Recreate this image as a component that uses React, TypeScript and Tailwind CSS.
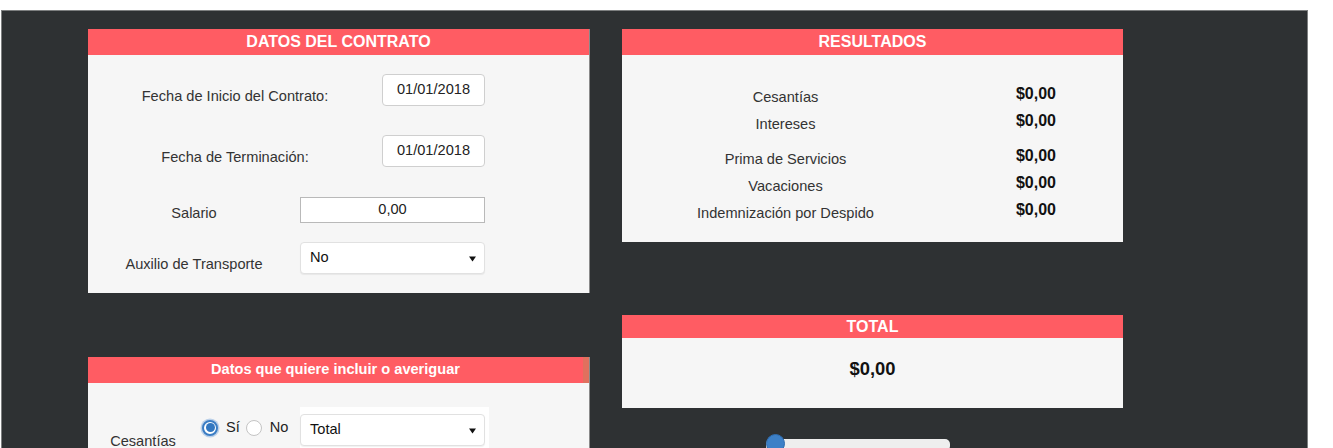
import React from 'react';

const font = { fontFamily: '"Liberation Sans", Arial, sans-serif' };

function Arrow() {
  return (
    <svg width="7" height="7" viewBox="0 0 7 7" className="shrink-0">
      <path d="M0 1.5 H7 L3.5 6.5 Z" fill="#111" />
    </svg>
  );
}

function CardHeader({ title, small = false, h = 'h-[26px]' }: { title: string; small?: boolean; h?: string }) {
  return (
    <div
      className={`${h} bg-[#ff5c63] flex items-center justify-center text-white font-bold ${
        small ? 'text-[14.6px]' : 'text-[16px]'
      }`}
    >
      {title}
    </div>
  );
}

function DateBox({ value }: { value: string }) {
  return (
    <div className="w-[103px] h-[32px] bg-white border border-[#cfcfcf] rounded-[4px] flex items-center justify-center text-[14.6px] text-[#222]">
      {value}
    </div>
  );
}

function SelectBox({ value }: { value: string }) {
  return (
    <div className="w-[185px] h-[32px] bg-white border border-[#e1e1e1] rounded-[4px] shadow-[0_1px_1px_rgba(0,0,0,0.06)] flex items-center justify-between pl-[9px] pr-[8px] text-[14.6px] text-[#111]">
      <span>{value}</span>
      <Arrow />
    </div>
  );
}

const results = [
  { label: 'Cesantías', gap: false },
  { label: 'Intereses', gap: false },
  { label: 'Prima de Servicios', gap: true },
  { label: 'Vacaciones', gap: false },
  { label: 'Indemnización por Despido', gap: false },
];

export default function App() {
  return (
    <div className="h-[448px] w-[1333px] bg-white overflow-hidden" style={font}>
      <div className="mt-[10px] ml-[1px] w-[1307px] h-[438px] bg-[#2e3133] border-t border-l border-r border-[#7d7f80] pl-[86px] pt-[18px] flex gap-[32px]">
        {/* left column */}
        <div className="w-[502px] flex flex-col">
          <div className="bg-[#f6f6f6] border-r border-[#8a8a8a]">
            <CardHeader title="DATOS DEL CONTRATO" />
            <div className="pt-[19px] pb-[19px] text-[14.6px] text-[#333]">
              <div className="flex items-start">
                <div className="w-[294px] text-center pt-[14px] leading-[17px]">Fecha de Inicio del Contrato:</div>
                <DateBox value="01/01/2018" />
              </div>
              <div className="flex items-start mt-[29px]">
                <div className="w-[294px] text-center pt-[14px] leading-[17px]">Fecha de Terminación:</div>
                <DateBox value="01/01/2018" />
              </div>
              <div className="flex items-start mt-[30px]">
                <div className="w-[212px] text-center pt-[8px] leading-[17px]">Salario</div>
                <div className="w-[185px] h-[26px] bg-white border border-[#b9b9b9] flex items-center justify-center text-[#222]">
                  0,00
                </div>
              </div>
              <div className="flex items-start mt-[19px]">
                <div className="w-[212px] text-center pt-[14px] leading-[17px]">Auxilio de Transporte</div>
                <SelectBox value="No" />
              </div>
            </div>
          </div>

          <div className="mt-[64px] bg-[#f6f6f6] border-r border-[#8a8a8a]">
            <div className="flex">
              <div className="flex-1">
                <CardHeader title="Datos que quiere incluir o averiguar" small />
              </div>
              <div className="w-[6px] bg-[#e0705e]" />
            </div>
            <div className="pt-[24px] flex items-start text-[14.6px] text-[#333]">
              <div className="w-[110px] text-center pt-[26px] leading-[17px]">Cesantías</div>
              <div className="w-[102px] flex items-center pt-[12px] pl-[4px] leading-[17px]">
                <span className="w-[16px] h-[16px] rounded-full border-2 border-[#3b7dc4] bg-white flex items-center justify-center shadow-[0_0_0_1.5px_rgba(80,140,210,0.35)]">
                  <span className="w-[9px] h-[9px] rounded-full bg-[#3277c0]" />
                </span>
                <span className="ml-[8px] text-[#222]">Sí</span>
                <span className="ml-[6px] w-[16px] h-[16px] rounded-full border border-[#c4c4c4] bg-white" />
                <span className="ml-[8px] text-[#222]">No</span>
              </div>
              <div className="w-[189px] bg-white pt-[7px] h-[60px]">
                <SelectBox value="Total" />
              </div>
            </div>
          </div>
        </div>

        {/* right column */}
        <div className="w-[501px] flex flex-col">
          <div className="bg-[#f6f6f6]">
            <CardHeader title="RESULTADOS" />
            <div className="pt-[30px] pb-[14px]">
              {results.map((r) => (
                <div key={r.label} className={`grid grid-cols-[327px_1fr] h-[27px] ${r.gap ? 'mt-[8px]' : ''}`}>
                  <div className="text-center text-[14.6px] text-[#333] leading-[17px] pt-[3.5px]">{r.label}</div>
                  <div className="text-center font-bold text-[16px] text-[#111] leading-[18px]">$0,00</div>
                </div>
              ))}
            </div>
          </div>

          <div className="mt-[73px] bg-[#f6f6f6]">
            <CardHeader title="TOTAL" h="h-[23px]" />
            <div className="h-[70px] pt-[20px] text-center font-bold text-[18.4px] leading-[21px] text-[#111]">$0,00</div>
          </div>

          <div className="mt-[26px] ml-[144px] w-[184px] relative h-[20px]">
            <div className="absolute left-0 right-0 top-[5px] h-[12px] rounded-[5px] bg-[#eeeeee]" />
            <div className="absolute left-0 top-0 w-[19px] h-[19px] rounded-full bg-[#3d80c7] border border-[#2f6db0]" />
          </div>
        </div>
      </div>
    </div>
  );
}
